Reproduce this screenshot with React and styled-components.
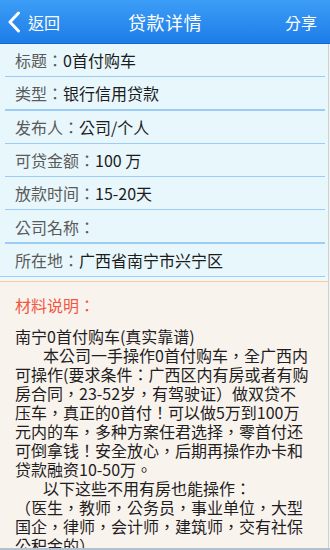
import React from "react";
import styled, { createGlobalStyle } from "styled-components";

const Global = createGlobalStyle`
  html, body { margin: 0; padding: 0; }
  body { font-family: "Noto Sans CJK TC", "Noto Sans CJK SC", "Noto Sans", sans-serif; background: #f9f3ee; }
  * { box-sizing: border-box; }
`;

const Screen = styled.div`
  width: 330px;
  height: 550px;
  display: flex;
  flex-direction: column;
  overflow: hidden;
  background: #f9f3ee;
`;

const Header = styled.header`
  height: 44px;
  flex: none;
  display: grid;
  grid-template-columns: 1fr auto 1fr;
  align-items: center;
  background: linear-gradient(#3c9df6, #1d7de9);
  border-bottom: 1px solid #1568cf;
  color: #fff;
  font-size: 16px;
  line-height: 20px;
`;

const Back = styled.div`
  display: flex;
  align-items: center;
  gap: 7px;
  padding-left: 7px;
`;

const Title = styled.div`
  font-size: 18px;
  letter-spacing: 0.5px;
`;

const Share = styled.div`
  justify-self: end;
  padding-right: 13px;
`;

const Body = styled.div`
  flex: 1;
  overflow: hidden;
  border-right: 1px solid #c9d1d7;
  margin-right: 1px;
`;

const Info = styled.section`
  background: #e8f7fc;
`;

const Row = styled.div`
  height: 33.3px;
  display: flex;
  align-items: center;
  padding-left: 15px;
  font-size: 16px;
  line-height: 20px;
  position: relative;
  padding-bottom: 1px;
  &::after {
    content: "";
    position: absolute;
    bottom: 0;
    left: ${(p) => (p.$last ? "0" : "5px")};
    right: 3px;
    height: 1.3px;
    background: #9dccf6;
  }
`;

const Label = styled.span`
  color: #5a5a5a;
`;

const Value = styled.span`
  color: #1c1c1c;
`;

const Gap = styled.div`
  height: 4px;
  background: #eef9fb;
`;

const Materials = styled.section`
  border-top: 1.3px solid #fbc89c;
  background: #f9f3ee;
  padding: 13px 15px 0 15px;
`;

const MatTitle = styled.div`
  color: #f2563f;
  font-size: 16px;
  line-height: 20px;
  margin-bottom: 12px;
`;

const Line = styled.div`
  color: #1e1e1e;
  font-size: 16px;
  line-height: 19px;
  white-space: pre;
  padding-left: ${(p) => (p.$indent ? "28px" : "0")};
`;

const rows = [
  ["标题：", "0首付购车"],
  ["类型：", "银行信用贷款"],
  ["发布人：", "公司/个人"],
  ["可贷金额：", "100 万"],
  ["放款时间：", "15-20天"],
  ["公司名称：", ""],
  ["所在地：", "广西省南宁市兴宁区"],
];

const lines = [
  ["南宁0首付购车(真实靠谱)", false],
  ["本公司一手操作0首付购车，全广西内", true],
  ["可操作(要求条件：广西区内有房或者有购", false],
  ["房合同，23-52岁，有驾驶证）做双贷不", false],
  ["压车，真正的0首付！可以做5万到100万", false],
  ["元内的车，多种方案任君选择，零首付还", false],
  ["可倒拿钱！安全放心，后期再操作办卡和", false],
  ["贷款融资10-50万。", false],
  ["以下这些不用有房也能操作：", true],
  ["（医生，教师，公务员，事业单位，大型", false],
  ["国企，律师，会计师，建筑师，交有社保", false],
  ["公积金的）", false],
];

const BottomEdge = styled.div`
  height: 2px;
  flex: none;
  background: #b3c1ce;
`;

export default function App() {
  return (
    <Screen>
      <Global />
      <Header>
        <Back>
          <svg width="14" height="22" viewBox="0 0 14 22">
            <path d="M11.5 2 L3 11 L11.5 20" fill="none" stroke="#fff" strokeWidth="3" strokeLinecap="round" strokeLinejoin="round" />
          </svg>
          <span>返回</span>
        </Back>
        <Title>贷款详情</Title>
        <Share>分享</Share>
      </Header>
      <Body>
        <Info>
          {rows.map(([l, v], i) => (
            <Row key={l} $last={i === rows.length - 1}>
              <Label>{l}</Label>
              <Value>{v}</Value>
            </Row>
          ))}
        </Info>
        <Gap />
        <Materials>
          <MatTitle>材料说明：</MatTitle>
          {lines.map(([t, ind], i) => (
            <Line key={i} $indent={ind}>{t}</Line>
          ))}
        </Materials>
      </Body>
      <BottomEdge />
    </Screen>
  );
}
